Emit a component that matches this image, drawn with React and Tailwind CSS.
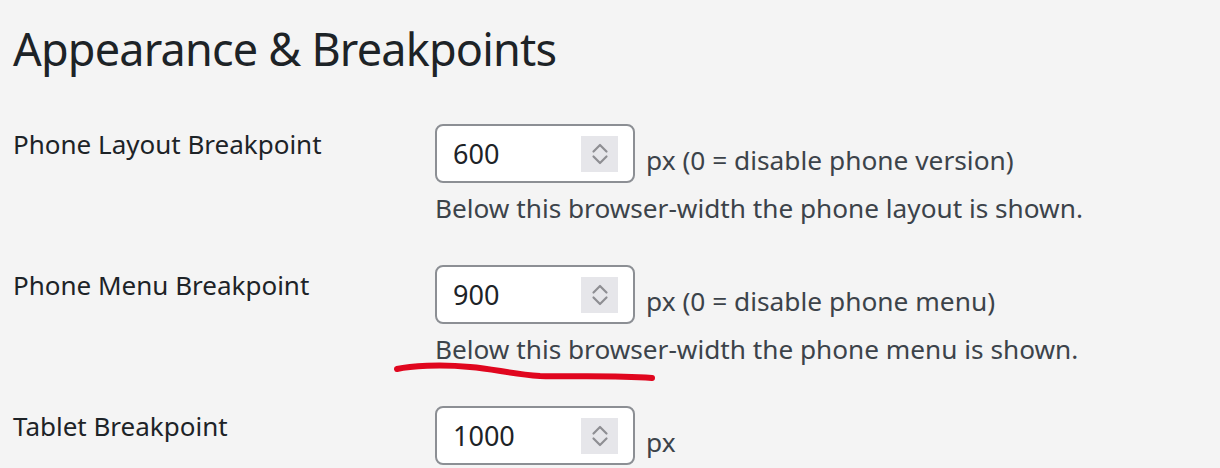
import React from 'react';

const ROWS = [
  { label: 'Phone Layout Breakpoint', value: '600', unit: 'px (0 = disable phone version)', desc: 'Below this browser-width the phone layout is shown.' },
  { label: 'Phone Menu Breakpoint', value: '900', unit: 'px (0 = disable phone menu)', desc: 'Below this browser-width the phone menu is shown.', marked: true },
  { label: 'Tablet Breakpoint', value: '1000', unit: 'px' },
];

function Spinner() {
  return (
    <div className="w-[37px] h-[36px] bg-[#e6e6ea] flex items-center justify-center">
      <svg width="20" height="26" viewBox="0 0 20 26" fill="none" stroke="#8e8e93" strokeWidth="2.2" strokeLinecap="round" strokeLinejoin="round">
        <path d="M3.5 10.5 L10 4 L16.5 10.5" />
        <path d="M3.5 15.5 L10 22 L16.5 15.5" />
      </svg>
    </div>
  );
}

function NumberField({ value }) {
  return (
    <div className="w-[200px] h-[59px] bg-white border-2 border-[#8c8f94] rounded-[8px] flex items-center pl-[16px] pr-[15px]">
      <span className="flex-1 text-[27px] leading-none">{value}</span>
      <Spinner />
    </div>
  );
}

export default function App() {
  return (
    <div className="relative min-h-screen bg-[#f4f4f4] pl-[13px] text-[#1d2327] font-['Noto_Sans',sans-serif] overflow-hidden">
      <h2 className="pt-[19px] text-[45px] leading-[60px] tracking-[-0.8px]">Appearance &amp; Breakpoints</h2>

      <div className="mt-[45px] flex flex-col gap-[39px]">
        {ROWS.map((row) => (
          <div key={row.label} className="flex">
            <div className="w-[422px] shrink-0 text-[26px] leading-[40px]">{row.label}</div>
            <div className="flex flex-col">
              <div className="flex items-end">
                <NumberField value={row.value} />
                <span className="ml-[11px] mb-[5px] text-[26.3px] leading-[36px] text-[#3c434a]">{row.unit}</span>
              </div>
              {row.desc && (
                <p className="mt-[7px] text-[26.2px] leading-[36px] text-[#3c434a]">{row.desc}</p>
              )}
            </div>
          </div>
        ))}
      </div>

      {/* hand-drawn highlight */}
      <svg className="absolute left-0 top-0 pointer-events-none" width="1220" height="468">
        <path
          d="M397 369 C 410 366, 440 364, 470 367 C 495 369, 510 374, 540 376 C 575 377, 610 375, 652 378"
          fill="none"
          stroke="#e0061e"
          strokeWidth="6"
          strokeLinecap="round"
        />
      </svg>
    </div>
  );
}
